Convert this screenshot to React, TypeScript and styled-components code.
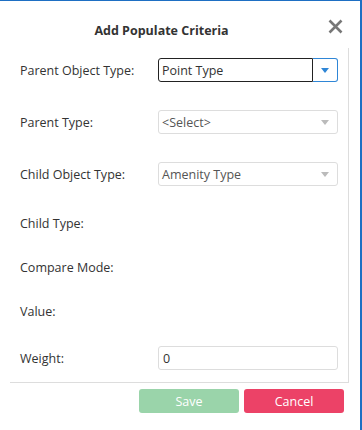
import React from 'react';
import styled, { createGlobalStyle } from 'styled-components';

const GlobalStyle = createGlobalStyle`
  html, body {
    margin: 0;
    padding: 0;
    background: #fff;
  }
  body {
    font-family: 'Open Sans', 'Noto Sans', sans-serif;
    color: #333;
  }
`;

const Dialog = styled.div`
  box-sizing: border-box;
  width: 362px;
  height: 430px;
  border-top: 1px solid #1e6fc3;
  border-right: 2px solid #1e6fc3;
  background: #fff;
  display: flex;
  flex-direction: column;
`;

const Header = styled.div`
  display: flex;
  align-items: flex-start;
  height: 47px;
  padding-right: 13px;
`;

const Title = styled.h2`
  flex: 1;
  margin: 20px 0 0;
  font-size: 12.5px;
  line-height: 20px;
  font-weight: 700;
  text-align: center;
  color: #333;
`;

const CloseButton = styled.button`
  width: 24px;
  height: 24px;
  margin-top: 13px;
  padding: 0;
  border: 0;
  background: transparent;
  display: flex;
  align-items: center;
  justify-content: center;
  cursor: pointer;
`;

const Body = styled.div`
  margin-left: 10px;
  width: 339px;
  padding: 10px 11px 12px 10px;
  box-sizing: border-box;
  border-right: 1px solid #ddd;
  border-bottom: 1px solid #ddd;
  display: flex;
  flex-direction: column;
  gap: 28px;
`;

const Row = styled.div<{ $tall?: boolean }>`
  display: grid;
  grid-template-columns: 138px 180px;
  align-items: center;
  height: ${(p) => (p.$tall ? '24px' : '16px')};
`;

const Label = styled.label`
  font-size: 12.5px;
  line-height: 16px;
  padding-top: 2px;
  color: #333;
`;

const Select = styled.div<{ $focused?: boolean }>`
  box-sizing: border-box;
  height: 24px;
  display: flex;
  border: 1px solid ${(p) => (p.$focused ? 'transparent' : '#ddd')};
  border-radius: 3px;
  background: #fff;
`;

const SelectValue = styled.div<{ $focused?: boolean }>`
  flex: 1;
  display: flex;
  align-items: center;
  padding-left: 3px;
  font-size: 12.5px;
  color: ${(p) => (p.$focused ? '#333' : '#555')};
  ${(p) =>
    p.$focused &&
    `
    margin: -1px 0 -1px -1px;
    border: 1px solid #222;
    border-radius: 3px 0 0 3px;
  `}
`;

const SelectArrow = styled.div<{ $focused?: boolean }>`
  width: 24px;
  display: flex;
  align-items: center;
  justify-content: center;
  ${(p) =>
    p.$focused &&
    `
    margin: -1px -1px -1px 0;
    border: 1px solid #2f86d6;
    border-left: 0;
    border-radius: 0 3px 3px 0;
  `}
`;

const Input = styled.input`
  box-sizing: border-box;
  height: 24px;
  width: 180px;
  border: 1px solid #ddd;
  border-radius: 3px;
  padding: 0 4px;
  font-family: inherit;
  font-size: 12.5px;
  color: #333;
  outline: none;
`;

const Footer = styled.div`
  display: flex;
  justify-content: flex-end;
  gap: 5px;
  padding: 6px 16px 0 0;
`;

const Button = styled.button<{ $variant: 'save' | 'cancel' }>`
  width: 100px;
  height: 24px;
  border: 0;
  border-radius: 3px;
  font-family: inherit;
  font-size: 12.5px;
  color: #fff;
  background: ${(p) => (p.$variant === 'save' ? '#9ad4aa' : '#ec4267')};
  cursor: ${(p) => (p.$variant === 'save' ? 'default' : 'pointer')};
`;

function Arrow({ color }: { color: string }) {
  return (
    <svg width="8" height="5" viewBox="0 0 8 5">
      <path d="M0 0h8L4 5z" fill={color} />
    </svg>
  );
}

function Dropdown(props: { value: string; focused?: boolean }) {
  return (
    <Select $focused={props.focused}>
      <SelectValue $focused={props.focused}>{props.value}</SelectValue>
      <SelectArrow $focused={props.focused}>
        <Arrow color={props.focused ? '#2f86d6' : '#bbb'} />
      </SelectArrow>
    </Select>
  );
}

export default function App() {
  return (
    <>
      <GlobalStyle />
      <Dialog>
        <Header>
          <Title>Add Populate Criteria</Title>
          <CloseButton aria-label="Close">
            <svg width="15" height="15" viewBox="0 0 15 15">
              <path d="M1.5 1.5l12 12M13.5 1.5l-12 12" stroke="#777" strokeWidth="2.6" />
            </svg>
          </CloseButton>
        </Header>
        <Body>
          <Row $tall>
            <Label>Parent Object Type:</Label>
            <Dropdown value="Point Type" focused />
          </Row>
          <Row $tall>
            <Label>Parent Type:</Label>
            <Dropdown value="<Select>" />
          </Row>
          <Row $tall>
            <Label>Child Object Type:</Label>
            <Dropdown value="Amenity Type" />
          </Row>
          <Row>
            <Label>Child Type:</Label>
          </Row>
          <Row>
            <Label>Compare Mode:</Label>
          </Row>
          <Row>
            <Label>Value:</Label>
          </Row>
          <Row $tall>
            <Label>Weight:</Label>
            <Input defaultValue="0" />
          </Row>
        </Body>
        <Footer>
          <Button $variant="save">Save</Button>
          <Button $variant="cancel">Cancel</Button>
        </Footer>
      </Dialog>
    </>
  );
}
